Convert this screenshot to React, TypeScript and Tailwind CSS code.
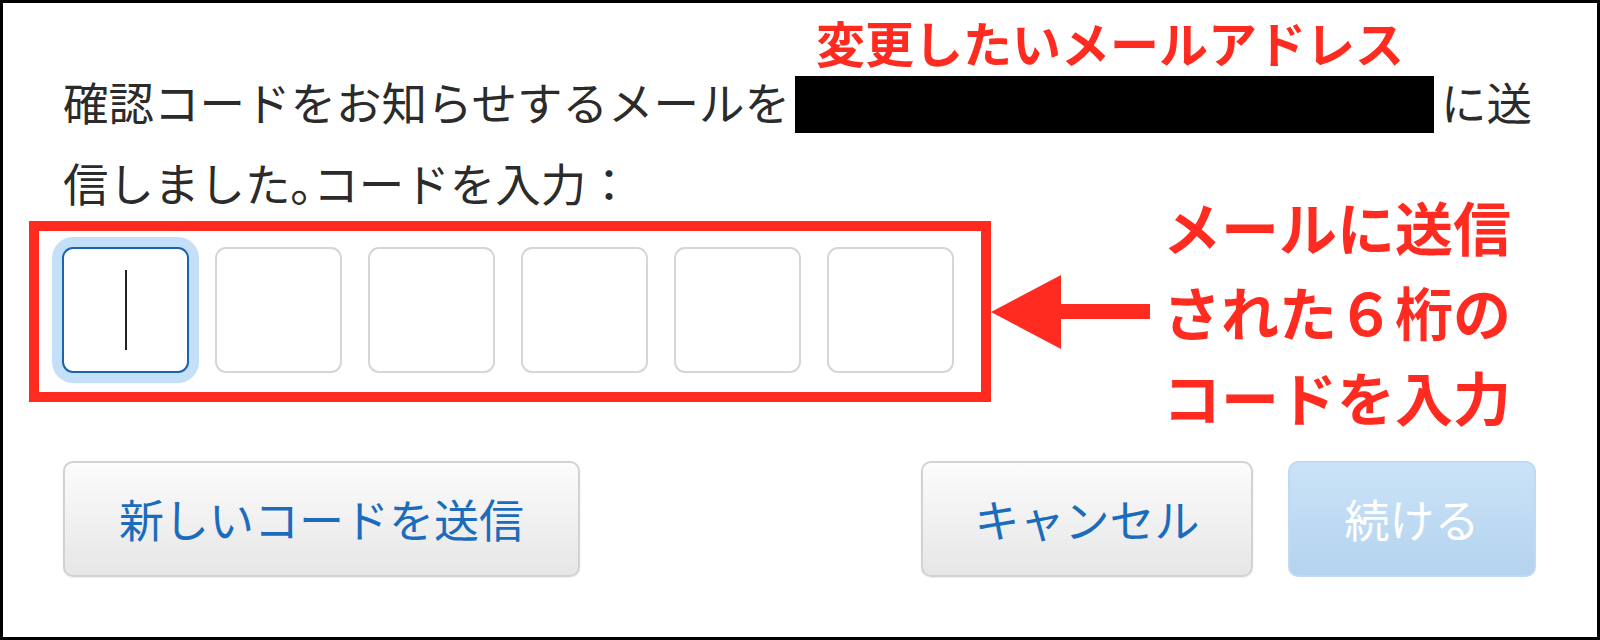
const RED = 'text-[#ff2b20]';

function CodeBox({ focused }: { focused?: boolean }) {
  if (focused) {
    return (
      <div className="flex h-[126px] w-[127px] items-center justify-center rounded-[11px] border-2 border-[#1d63ab] bg-white ring-[10px] ring-[#c4dff8]">
        <div className="h-[80px] w-[2px] bg-[#222]" />
      </div>
    );
  }
  return <div className="h-[126px] w-[127px] rounded-[11px] border-2 border-[#d6d6d6] bg-white" />;
}

function Arrow() {
  return (
    <svg width="159" height="76" viewBox="0 0 159 76" className="shrink-0">
      <polygon points="0,38 70,1 70,75" fill="#ff2b20" />
      <rect x="69" y="30" width="90" height="15" fill="#ff2b20" />
    </svg>
  );
}

export default function App() {
  return (
    <div
      className="flex h-[640px] w-[1600px] flex-col border-[3px] border-black bg-white text-[#2b2b2b]"
      style={{ fontFamily: '"Noto Sans CJK JP", "Noto Sans", sans-serif' }}
    >
      {/* message */}
      <div className="pl-[60px] pt-[55px] text-[45.5px]">
        <div className="flex h-[86px] items-center whitespace-nowrap leading-[86px]">
          <span>確認コードをお知らせするメールを</span>
          <div className="relative ml-[5px] mr-[7px] mt-[7px] h-[57px] w-[639px] bg-black">
            <span
              className={`absolute left-[21px] top-[-59px] whitespace-nowrap text-[49px] font-bold leading-none ${RED}`}
            >
              変更したいメールアドレス
            </span>
          </div>
          <span>に送</span>
        </div>
        <div className="flex h-[77px] items-center whitespace-nowrap leading-[77px]">
          <span>信しました｡コードを入力：</span>
        </div>
      </div>

      {/* code inputs + annotation */}
      <div className="ml-[26px] flex items-center">
        <div className="flex h-[181px] w-[962px] shrink-0 gap-[26px] border-[10px] border-[#ff2b20] pl-[23px] pt-[16px]">
          <CodeBox focused />
          <CodeBox />
          <CodeBox />
          <CodeBox />
          <CodeBox />
          <CodeBox />
        </div>
        <Arrow />
        <div className={`-my-[37px] ml-[13px] whitespace-nowrap text-[58px] font-bold leading-[85px] ${RED}`}>
          <div>メールに送信</div>
          <div>された６桁の</div>
          <div>コードを入力</div>
        </div>
      </div>

      {/* buttons */}
      <div className="mt-[59px] flex items-start justify-between pl-[60px] pr-[61px] text-[45px]">
        <button className="flex h-[116px] w-[517px] items-center justify-center rounded-[10px] border-2 border-[#d2d2d2] bg-linear-to-b from-[#fcfcfc] to-[#e6e6e6] text-[#1c6cbd] shadow-[0_1px_2px_rgba(0,0,0,0.08)]">
          新しいコードを送信
        </button>
        <div className="flex gap-[35px]">
          <button className="flex h-[116px] w-[332px] items-center justify-center rounded-[10px] border-2 border-[#d2d2d2] bg-linear-to-b from-[#fcfcfc] to-[#e6e6e6] text-[#1c6cbd] shadow-[0_1px_2px_rgba(0,0,0,0.08)]">
            キャンセル
          </button>
          <button
            disabled
            className="flex h-[116px] w-[248px] items-center justify-center rounded-[10px] border-2 border-[#bfdaf2] bg-linear-to-b from-[#cae3f8] to-[#b4d3ee] text-white"
          >
            続ける
          </button>
        </div>
      </div>
    </div>
  );
}
